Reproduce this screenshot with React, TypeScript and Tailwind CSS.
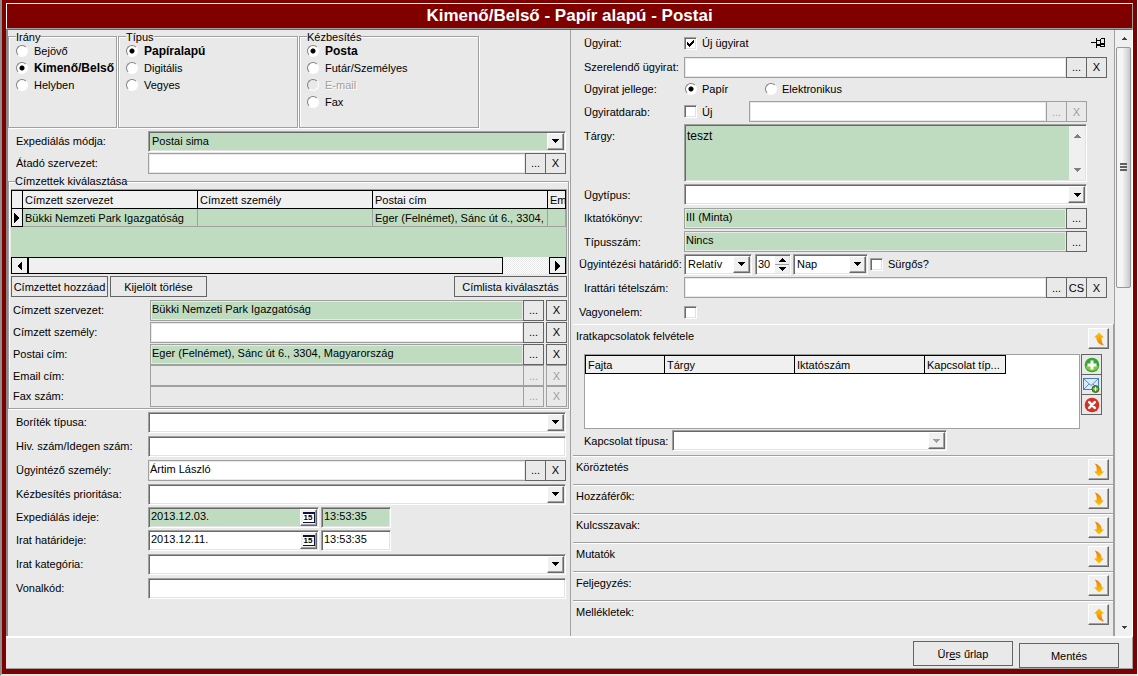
import React from "react";

const SUNKEN =
  "border border-t-[#a0a0a0] border-l-[#a0a0a0] border-r-white border-b-white shadow-[inset_1px_1px_0_#696969,inset_-1px_-1px_0_#e3e3e3]";
const RAISED =
  "border border-t-white border-l-white border-r-[#696969] border-b-[#696969] bg-[#f0f0f0] shadow-[inset_-1px_-1px_0_#a0a0a0]";
const GREEN = "bg-[#c0dcc0]";

function Triangle({ dir, small }: { dir: "up" | "down" | "left" | "right"; small?: boolean }) {
  const d = {
    up: "M0 4 L4 0 L8 4 Z",
    down: "M0 0 H8 L4 4 Z",
    left: "M5 0 V10 L0 5 Z",
    right: "M0 0 V10 L5 5 Z",
  }[dir];
  const vertical = dir === "up" || dir === "down";
  return (
    <svg
      viewBox={vertical ? "0 0 8 4" : "0 0 5 10"}
      className={vertical ? (small ? "h-[3px] w-[6px]" : "h-1 w-2") : "h-[10px] w-[5px]"}
      fill="currentColor"
      shapeRendering="crispEdges"
      aria-hidden="true"
    >
      <path d={d} />
    </svg>
  );
}

function Radio({ name, label, checked, disabled }: { name: string; label: string; checked?: boolean; disabled?: boolean }) {
  return (
    <label
      className={`flex h-[17px] items-center gap-[6px] whitespace-nowrap ${checked ? "text-xs font-bold" : ""} ${
        disabled ? "text-[#a0a0a0] [text-shadow:1px_1px_0_#fff]" : ""
      }`}
    >
      <RadioDot name={name} checked={checked} disabled={disabled} />
      {label}
    </label>
  );
}

function RadioDot({ name, checked, disabled }: { name: string; checked?: boolean; disabled?: boolean }) {
  return (
    <input
      type="radio"
      name={name}
      defaultChecked={checked}
      disabled={disabled}
      className="size-[12px] shrink-0 appearance-none rounded-full border border-t-[#808080] border-l-[#808080] border-r-white border-b-white bg-white checked:bg-[radial-gradient(circle,#000_2px,#fff_3px)] disabled:bg-[#e9e9e9]"
    />
  );
}

function Checkbox({ id, checked }: { id: string; checked?: boolean }) {
  return (
    <span className="relative flex shrink-0">
      <input id={id} type="checkbox" defaultChecked={checked} className={`peer size-[13px] appearance-none bg-white ${SUNKEN}`} />
      <svg viewBox="0 0 7 7" className="pointer-events-none absolute top-[3px] left-[3px] hidden size-[7px] peer-checked:block" shapeRendering="crispEdges" aria-hidden="true">
        <path d="M0 2h1v1h1v1h1v-1h1v-1h1v-1h1v-1h1v3h-1v1h-1v1h-1v1h-1v1h-1v-1h-1v-1h-1z" fill="#000" />
      </svg>
    </span>
  );
}

function FlatButton({ children, disabled, label }: { children: React.ReactNode; disabled?: boolean; label?: string }) {
  return (
    <button
      type="button"
      disabled={disabled}
      aria-label={label}
      className="-ml-px flex h-[21px] w-[21px] shrink-0 items-center justify-center border border-[#646464] disabled:border-[#a0a0a0] disabled:text-[#a0a0a0]"
    >
      {children}
    </button>
  );
}

function Combo({ id, value, options, green, disabled, width }: { id: string; value?: string; options?: string[]; green?: boolean; disabled?: boolean; width?: string }) {
  return (
    <span className={`relative flex ${width ?? "min-w-0 flex-1"}`}>
      <select
        id={id}
        aria-label={id}
        disabled={disabled}
        defaultValue={value ?? ""}
        className={`h-[21px] w-full appearance-none pr-5 pl-[3px] opacity-100 ${SUNKEN} ${green ? GREEN : "bg-white"}`}
      >
        {(options ?? [value ?? ""]).map((o) => (
          <option key={o}>{o}</option>
        ))}
      </select>
      <span
        className={`pointer-events-none absolute top-[2px] right-[2px] flex h-[17px] w-[17px] items-center justify-center ${RAISED} ${
          disabled ? "text-[#a0a0a0]" : "text-black"
        }`}
      >
        <Triangle dir="down" />
      </span>
    </span>
  );
}

function Lookup({ id, value, green, disabled, grayed, buttons = ["...", "X"], split }: { id: string; value?: string; green?: boolean; disabled?: boolean; grayed?: boolean; buttons?: string[]; split?: boolean }) {
  return (
    <div className="flex min-w-0 flex-1">
      <input
        id={id}
        defaultValue={value}
        disabled={disabled}
        className={`h-[21px] min-w-0 flex-1 border border-[#a0a0a0] px-px pb-[3px] shadow-[inset_0_0_0_1px_#e9e9e9] ${
          green ? GREEN : grayed ? "bg-[#e9e9e9]" : "bg-white"
        }`}
      />
      {buttons.map((b) => (
        <span key={b} className={split && b === "X" ? "ml-[3px] flex" : "flex"}>
          <FlatButton disabled={disabled}>{b}</FlatButton>
        </span>
      ))}
    </div>
  );
}

function Row({ id, label, height = "h-6", children }: { id: string; label: string; height?: string; children: React.ReactNode }) {
  return (
    <div className={`flex items-center pr-1 pl-2 ${height}`}>
      <label htmlFor={id} className="w-[132px] shrink-0">
        {label}
      </label>
      {children}
    </div>
  );
}

function AddresseeRow({ id, label, height = "h-[22px]", children }: { id: string; label: string; height?: string; children: React.ReactNode }) {
  return (
    <div className={`flex items-center ${height}`}>
      <label htmlFor={id} className="w-[137px] shrink-0">
        {label}
      </label>
      {children}
    </div>
  );
}

function CaseRow({ id, label, height, long, children }: { id: string; label: string; height: string; long?: boolean; children: React.ReactNode }) {
  return (
    <div className={`flex items-center ${long ? "pl-2" : "pl-[13px]"} ${height}`}>
      <label htmlFor={id} className={`shrink-0 whitespace-nowrap ${long ? "w-[105px]" : "w-[100px]"}`}>
        {label}
      </label>
      {children}
    </div>
  );
}

function DateTime({ id, date, time, green }: { id: string; date: string; time: string; green?: boolean }) {
  const tone = green ? GREEN : "bg-white";
  return (
    <div className="flex gap-[2px]">
      <div className={`flex h-[21px] w-[171px] p-px ${SUNKEN} ${tone}`}>
        <input id={id} defaultValue={date} className="min-w-0 flex-1 bg-transparent px-px pb-[2px]" />
        <button type="button" aria-label="Naptár" className={`flex w-[17px] items-center justify-center ${RAISED}`}>
          <span className="flex h-[11px] w-[12px] items-center justify-center border-t-2 border-r border-b border-[#101040] bg-white text-[8px] leading-none font-bold">15</span>
        </button>
      </div>
      <input aria-label={`${id} időpont`} defaultValue={time} className={`h-[21px] w-[70px] pb-[2px] pl-[2px] ${SUNKEN} ${tone}`} />
    </div>
  );
}

function CurvedArrow({ up }: { up?: boolean }) {
  return (
    <svg viewBox="0 0 12 14" className="h-[14px] w-3" aria-hidden="true">
      <defs>
        <linearGradient id={up ? "arrowUp" : "arrowDown"} x1="0" x2="0" y1={up ? "0" : "1"} y2={up ? "1" : "0"}>
          <stop offset="0" stopColor="#fcc800" />
          <stop offset="1" stopColor="#ee7a10" />
        </linearGradient>
      </defs>
      {up ? (
        <path d="M6 0.500 L11 5.500 H8.700 C8.500 9 9 11 11 13.500 C6 12.500 3.500 10 3.300 5.500 H1 Z" fill="url(#arrowUp)" />
      ) : (
        <path d="M6 13.500 L11 8.500 H8.900 C8.600 4.500 6 1.500 1.500 0.500 C3.800 3 3.900 5 3.500 8.500 H1 Z" fill="url(#arrowDown)" />
      )}
    </svg>
  );
}

function SectionHeader({ title, up }: { title: string; up?: boolean }) {
  return (
    <div className="flex h-7 items-start justify-between pr-1 pl-[3px]">
      <h2 className="pt-[4px]">{title}</h2>
      <button type="button" aria-label={title} className={`mt-[3px] flex size-[21px] items-center justify-center ${RAISED}`}>
        <CurvedArrow up={up} />
      </button>
    </div>
  );
}

function Group({ title, basis, children }: { title: string; basis: string; children: React.ReactNode }) {
  return (
    <fieldset className={`h-[98px] min-w-0 border border-[#a0a0a0] pl-[7px] shadow-[1px_1px_0_#fff,inset_1px_1px_0_#fff] ${basis}`}>
      <legend className="h-3 bg-[#e9e9e9] leading-[14px]">{title}</legend>
      {children}
    </fieldset>
  );
}

const HEAD = "h-[18px] overflow-hidden border border-black bg-[#f0f0f0] pl-[2px] pr-0 text-left font-normal whitespace-nowrap";
const CELL = "h-[18px] overflow-hidden border border-[#a0a0a0] pr-0 pl-[2px] whitespace-nowrap";

function AddresseeTable() {
  return (
    <div className="overflow-hidden border-t border-r border-[#a0a0a0] bg-[#c0dcc0]">
      <div className="h-[67px]">
        <table className="w-full table-fixed border-collapse">
          <colgroup>
            <col className="w-[11px]" />
            <col className="w-[175px]" />
            <col className="w-[175px]" />
            <col className="w-[175px]" />
            <col />
          </colgroup>
          <thead>
            <tr>
              <th className={HEAD} aria-label="Kijelölés" />
              <th className={HEAD}>Címzett szervezet</th>
              <th className={HEAD}>Címzett személy</th>
              <th className={HEAD}>Postai cím</th>
              <th className={HEAD}>Em</th>
            </tr>
          </thead>
          <tbody>
            <tr>
              <td className="border border-black bg-[#f0f0f0] pl-[2px]">
                <Triangle dir="right" />
              </td>
              <td className={CELL}>Bükki Nemzeti Park Igazgatóság</td>
              <td className={CELL} />
              <td className={CELL}>Eger (Felnémet), Sánc út 6., 3304, M</td>
              <td className={CELL} />
            </tr>
          </tbody>
        </table>
      </div>
      <div className="flex h-[17px] bg-[repeating-conic-gradient(#ffffff_0_25%,#e9e9e9_0_50%)] bg-[length:2px_2px]">
        <button type="button" aria-label="Balra" className="flex w-[17px] items-center justify-center border border-black bg-[#f0f0f0]">
          <Triangle dir="left" />
        </button>
        <div className="flex-[475] border border-black bg-[#f0f0f0]" />
        <div className="flex-[46]" />
        <button type="button" aria-label="Jobbra" className="flex w-[17px] items-center justify-center border border-black bg-[#f0f0f0]">
          <Triangle dir="right" />
        </button>
      </div>
    </div>
  );
}

function LeftPanel() {
  return (
    <div className="min-w-0 flex-[563] border-r border-[#a0a0a0]">
      <div className="flex gap-px">
        <Group title="Irány" basis="w-[109px]">
          <Radio name="irany" label="Bejövő" />
          <Radio name="irany" label="Kimenő/Belső" checked />
          <Radio name="irany" label="Helyben" />
        </Group>
        <Group title="Típus" basis="w-[180px]">
          <Radio name="tipus" label="Papíralapú" checked />
          <Radio name="tipus" label="Digitális" />
          <Radio name="tipus" label="Vegyes" />
        </Group>
        <Group title="Kézbesítés" basis="w-[180px]">
          <Radio name="kezbesites" label="Posta" checked />
          <Radio name="kezbesites" label="Futár/Személyes" />
          <Radio name="kezbesites" label="E-mail" disabled />
          <Radio name="kezbesites" label="Fax" />
        </Group>
      </div>
      <div className="pt-[2px]">
        <Row id="expedialas-modja" label="Expediálás módja:" height="h-[22px]">
          <Combo id="expedialas-modja" value="Postai sima" green />
        </Row>
        <Row id="atado" label="Átadó szervezet:" height="h-[22px]">
          <Lookup id="atado" />
        </Row>
      </div>
      <fieldset className="mt-px mr-px min-w-0 border border-[#a0a0a0] pr-px pb-[2px] pl-[2px] shadow-[1px_1px_0_#fff,inset_1px_1px_0_#fff]">
        <legend className="ml-1 h-3 bg-[#e9e9e9] leading-3">Címzettek kiválasztása</legend>
        <div className="pt-[2px]">
          <AddresseeTable />
        </div>
        <div className="mt-[2px] flex gap-[2px]">
          <button type="button" className="h-[21px] w-[97px] border border-[#646464] whitespace-nowrap">Címzettet hozzáad</button>
          <button type="button" className="h-[21px] w-[97px] border border-[#646464] whitespace-nowrap">Kijelölt törlése</button>
          <button type="button" className="ml-auto h-[21px] w-[113px] border border-[#646464] whitespace-nowrap">Címlista kiválasztás</button>
        </div>
        <div className="mt-[2px] pl-[2px]">
          <AddresseeRow id="c-szervezet" label="Címzett szervezet:">
            <Lookup id="c-szervezet" value="Bükki Nemzeti Park Igazgatóság" green split />
          </AddresseeRow>
          <AddresseeRow id="c-szemely" label="Címzett személy:">
            <Lookup id="c-szemely" split />
          </AddresseeRow>
          <AddresseeRow id="c-postai" label="Postai cím:">
            <Lookup id="c-postai" value="Eger (Felnémet), Sánc út 6., 3304, Magyarország" green split />
          </AddresseeRow>
          <AddresseeRow id="c-email" label="Email cím:" height="h-[21px]">
            <Lookup id="c-email" disabled grayed split />
          </AddresseeRow>
          <AddresseeRow id="c-fax" label="Fax szám:" height="h-[20px]">
            <Lookup id="c-fax" disabled grayed split />
          </AddresseeRow>
        </div>
      </fieldset>
      <div className="pt-px">
        <Row id="boritek" label="Boríték típusa:">
          <Combo id="boritek" />
        </Row>
        <Row id="hivszam" label="Hiv. szám/Idegen szám:">
          <input id="hivszam" className={`h-[21px] min-w-0 flex-1 bg-white ${SUNKEN}`} />
        </Row>
        <Row id="ugyintezo" label="Ügyintéző személy:">
          <Lookup id="ugyintezo" value="Ártim László" />
        </Row>
        <Row id="prioritas" label="Kézbesítés prioritása:">
          <Combo id="prioritas" />
        </Row>
        <Row id="expedialas-ideje" label="Expediálás ideje:" height="h-[22px]">
          <DateTime id="expedialas-ideje" date="2013.12.03." time="13:53:35" green />
        </Row>
        <Row id="hatarido" label="Irat határideje:">
          <DateTime id="hatarido" date="2013.12.11." time="13:53:35" />
        </Row>
        <Row id="kategoria" label="Irat kategória:">
          <Combo id="kategoria" />
        </Row>
        <Row id="vonalkod" label="Vonalkód:">
          <input id="vonalkod" className={`h-[21px] min-w-0 flex-1 bg-white ${SUNKEN}`} />
        </Row>
      </div>
    </div>
  );
}

function PinIcon() {
  return (
    <svg viewBox="0 0 15 10" className="h-[10px] w-[15px]" shapeRendering="crispEdges" aria-hidden="true">
      <path d="M0 4h5v1H0zM5 0h1v10H5zM6 2h4v1H6zM6 6h4v2H6zM9 1h1v8H9zM10 0h4v1h-4zM10 8h4v1h-4zM13 0h1v9h-1zM10 5h3v2h-3z" fill="#000" />
    </svg>
  );
}

function AddIcon() {
  return (
    <svg viewBox="0 0 16 16" className="size-4" aria-hidden="true">
      <circle cx="8" cy="8" r="7.300" fill="#35a535" />
      <path d="M1.500 9.500 A7 7 0 0 0 14.500 9.500 Q8 6 1.500 9.500Z" fill="#7ccb35" />
      <path d="M6.500 3.500h3v3h3v3h-3v3h-3v-3h-3v-3h3z" fill="#fff" />
    </svg>
  );
}

function MailAddIcon() {
  return (
    <svg viewBox="0 0 17 16" className="h-4 w-[17px]" aria-hidden="true">
      <rect x="0.500" y="1.500" width="15" height="11" fill="#dcebfb" stroke="#4a7ab8" />
      <path d="M1 2 L8 8.500 L15 2 M1 12 L6 7 M15 12 L10 7" fill="none" stroke="#5b8ac6" />
      <circle cx="12.500" cy="12" r="3.500" fill="#4f9a3a" stroke="#2f6d22" />
      <path d="M12.500 10v4M10.500 12h4" stroke="#fff" />
    </svg>
  );
}

function DeleteIcon() {
  return (
    <svg viewBox="0 0 16 16" className="size-4" aria-hidden="true">
      <circle cx="8" cy="8" r="7.300" fill="#d62f24" />
      <path d="M5.200 5.200 L10.800 10.800 M10.800 5.200 L5.200 10.800" stroke="#fff" strokeWidth="2.600" strokeLinecap="round" />
    </svg>
  );
}

function Relations() {
  return (
    <section className="border-t border-white pb-[4px]">
      <SectionHeader title="Iratkapcsolatok felvétele" up />
      <div className="mt-px flex pr-[11px] pl-[11px]">
        <div className="h-[75px] min-w-0 flex-1 overflow-hidden border border-[#a0a0a0] bg-white">
          <table className="w-[420px] table-fixed border-collapse">
            <colgroup>
              <col className="w-[79px]" />
              <col className="w-[130px]" />
              <col className="w-[130px]" />
              <col className="w-[81px]" />
            </colgroup>
            <thead>
              <tr>
                <th className={HEAD}>Fajta</th>
                <th className={HEAD}>Tárgy</th>
                <th className={HEAD}>Iktatószám</th>
                <th className={HEAD}>Kapcsolat típ...</th>
              </tr>
            </thead>
          </table>
        </div>
        <div className="ml-[2px] flex flex-col -space-y-px">
          <FlatButton label="Hozzáadás"><AddIcon /></FlatButton>
          <FlatButton label="Levél hozzáadása"><MailAddIcon /></FlatButton>
          <FlatButton label="Törlés"><DeleteIcon /></FlatButton>
        </div>
      </div>
      <div className="mt-px flex items-center pl-[11px]">
        <label htmlFor="kapcsolat" className="w-[88px] shrink-0 whitespace-nowrap">Kapcsolat típusa:</label>
        <Combo id="kapcsolat" disabled width="w-[275px]" />
      </div>
    </section>
  );
}

function RightPanel() {
  const sections = ["Köröztetés", "Hozzáférők:", "Kulcsszavak:", "Mutatók", "Feljegyzés:"];
  return (
    <div className="flex min-w-0 flex-[544] flex-col border-r border-[#a0a0a0]">
      <div>
        <CaseRow id="uj-ugyirat" label="Ügyirat:" height="h-[26px] pr-2">
          <Checkbox id="uj-ugyirat" checked />
          <label htmlFor="uj-ugyirat" className="pl-[5px]">Új ügyirat</label>
          <button type="button" aria-label="Rögzítés" className="ml-auto"><PinIcon /></button>
        </CaseRow>
        <CaseRow id="szerelendo" label="Szerelendő ügyirat:" height="h-[22px] pr-[7px]">
          <Lookup id="szerelendo" />
        </CaseRow>
        <CaseRow id="jelleg" label="Ügyirat jellege:" height="h-[22px]">
          <label className="flex w-[80px] items-center gap-[5px] pl-px">
            <RadioDot name="jelleg" checked />
            Papír
          </label>
          <label className="flex items-center gap-[5px] pl-px">
            <RadioDot name="jelleg" />
            Elektronikus
          </label>
        </CaseRow>
        <CaseRow id="uj-darab" label="Ügyiratdarab:" height="h-[23px] pr-[27px]">
          <Checkbox id="uj-darab" />
          <label htmlFor="uj-darab" className="w-[52px] pl-[5px]">Új</label>
          <Lookup id="darab" disabled />
        </CaseRow>
        <div className="flex h-[60px] items-center pr-[27px] pl-[13px]">
          <label htmlFor="targy" className="w-[100px] shrink-0 self-start pt-[6px]">Tárgy:</label>
          <div className={`flex h-[58px] min-w-0 flex-1 p-px ${SUNKEN} ${GREEN}`}>
            <textarea id="targy" defaultValue="teszt" className="min-w-0 flex-1 resize-none overflow-hidden px-px pt-[2px] text-xs" />
            <div className="flex w-4 flex-col items-center justify-between bg-[#f0f0f0] py-2 text-[#808080]" aria-hidden="true">
              <Triangle dir="up" />
              <Triangle dir="down" />
            </div>
          </div>
        </div>
        <CaseRow id="ugytipus" label="Ügytípus:" height="h-[23px] pr-[27px]">
          <Combo id="ugytipus" />
        </CaseRow>
        <CaseRow id="iktatokonyv" label="Iktatókönyv:" height="h-6 pr-[27px]">
          <Lookup id="iktatokonyv" value="III (Minta)" green buttons={["..."]} />
        </CaseRow>
        <CaseRow id="tipusszam" label="Típusszám:" height="h-[23px] pr-[27px]">
          <Lookup id="tipusszam" value="Nincs" green buttons={["..."]} />
        </CaseRow>
        <CaseRow id="relativ" label="Ügyintézési határidő:" height="h-[22px]" long>
          <Combo id="relativ" value="Relatív" width="w-[68px]" />
          <div className={`mr-[2px] ml-[3px] flex h-[21px] w-[36px] bg-white p-px ${SUNKEN}`}>
            <input aria-label="Határidő értéke" defaultValue="30" className="min-w-0 flex-1 pl-px" />
            <div className="flex w-[14px] flex-col">
              <button type="button" aria-label="Növelés" className="flex flex-1 items-center justify-center border-b border-[#a0a0a0] bg-[#f0f0f0]"><Triangle dir="up" /></button>
              <button type="button" aria-label="Csökkentés" className="flex flex-1 items-center justify-center bg-[#f0f0f0]"><Triangle dir="down" /></button>
            </div>
          </div>
          <Combo id="egyseg" value="Nap" width="w-[75px]" />
          <span className="ml-[2px] flex items-center">
            <Checkbox id="surgos" />
            <label htmlFor="surgos" className="pl-[5px]">Sürgős?</label>
          </span>
        </CaseRow>
        <CaseRow id="irattari" label="Irattári tételszám:" height="h-[25px] pr-[7px]">
          <Lookup id="irattari" buttons={["...", "CS", "X"]} />
        </CaseRow>
        <CaseRow id="vagyonelem" label="Vagyonelem:" height="h-6" long>
          <Checkbox id="vagyonelem" />
        </CaseRow>
      </div>
      <div className="ml-[2px] flex-1 border-r border-[#a0a0a0]">
        <Relations />
        {sections.map((s) => (
          <section key={s} className="border-t border-[#a0a0a0] shadow-[inset_0_1px_0_#fff]">
            <SectionHeader title={s} />
          </section>
        ))}
        <section className="border-t border-[#a0a0a0] shadow-[inset_0_1px_0_#fff]">
          <SectionHeader title="Mellékletek:" up />
        </section>
      </div>
    </div>
  );
}

function PageScrollbar() {
  return (
    <div className="flex w-[17px] shrink-0 flex-col items-center bg-[#f0f0f0] text-[#404040]" aria-hidden="true">
      <div className="flex h-[17px] items-center"><Triangle dir="up" small /></div>
      <div className="flex w-[15px] flex-[240] flex-col items-center justify-center gap-px rounded-[2px] border border-[#979797] bg-linear-to-r from-[#f5f5f5] from-40% to-[#c8c8cc]">
        <span className="h-[2px] w-[7px] bg-[#606060]" />
        <span className="h-[2px] w-[7px] bg-[#606060]" />
        <span className="h-[2px] w-[7px] bg-[#606060]" />
      </div>
      <div className="flex-[332]" />
      <div className="flex h-[18px] items-center"><Triangle dir="down" small /></div>
    </div>
  );
}

export default function App() {
  return (
    <main className="flex min-h-screen flex-col border-r border-b-2 border-l-2 border-r-white border-b-[#e3e3e3] border-l-[#909090] bg-[#800000] px-1 pt-[3px] pb-[5px] font-['Liberation_Sans',Arial,sans-serif] text-[11px] leading-[14px] text-black">
      <h1 className="h-[26px] border border-t-white border-l-white border-r-[#a0a0a0] border-b-[#a0a0a0] text-center text-[17px] leading-6 font-bold text-white">
        Kimenő/Belső - Papír alapú - Postai
      </h1>
      <form className="flex flex-1 flex-col bg-[#e9e9e9]" onSubmit={(e) => e.preventDefault()}>
        <div className="flex flex-1 border-t border-r border-l-2 border-t-[#696969] border-r-white border-l-[#888888]">
          <LeftPanel />
          <RightPanel />
          <PageScrollbar />
        </div>
        <footer className="flex h-[33px] shrink-0 items-start justify-end gap-[6px] border-t-2 border-r border-b border-t-white border-r-[#a0a0a0] border-b-[#a0a0a0] pt-[3px] pr-[13px]">
          <button type="button" className="h-[25px] w-[100px] border border-[#646464]">
            Ür<u>e</u>s űrlap
          </button>
          <button type="submit" className="mt-[2px] h-[25px] w-[100px] border border-[#646464]">
            Mentés
          </button>
        </footer>
      </form>
    </main>
  );
}
